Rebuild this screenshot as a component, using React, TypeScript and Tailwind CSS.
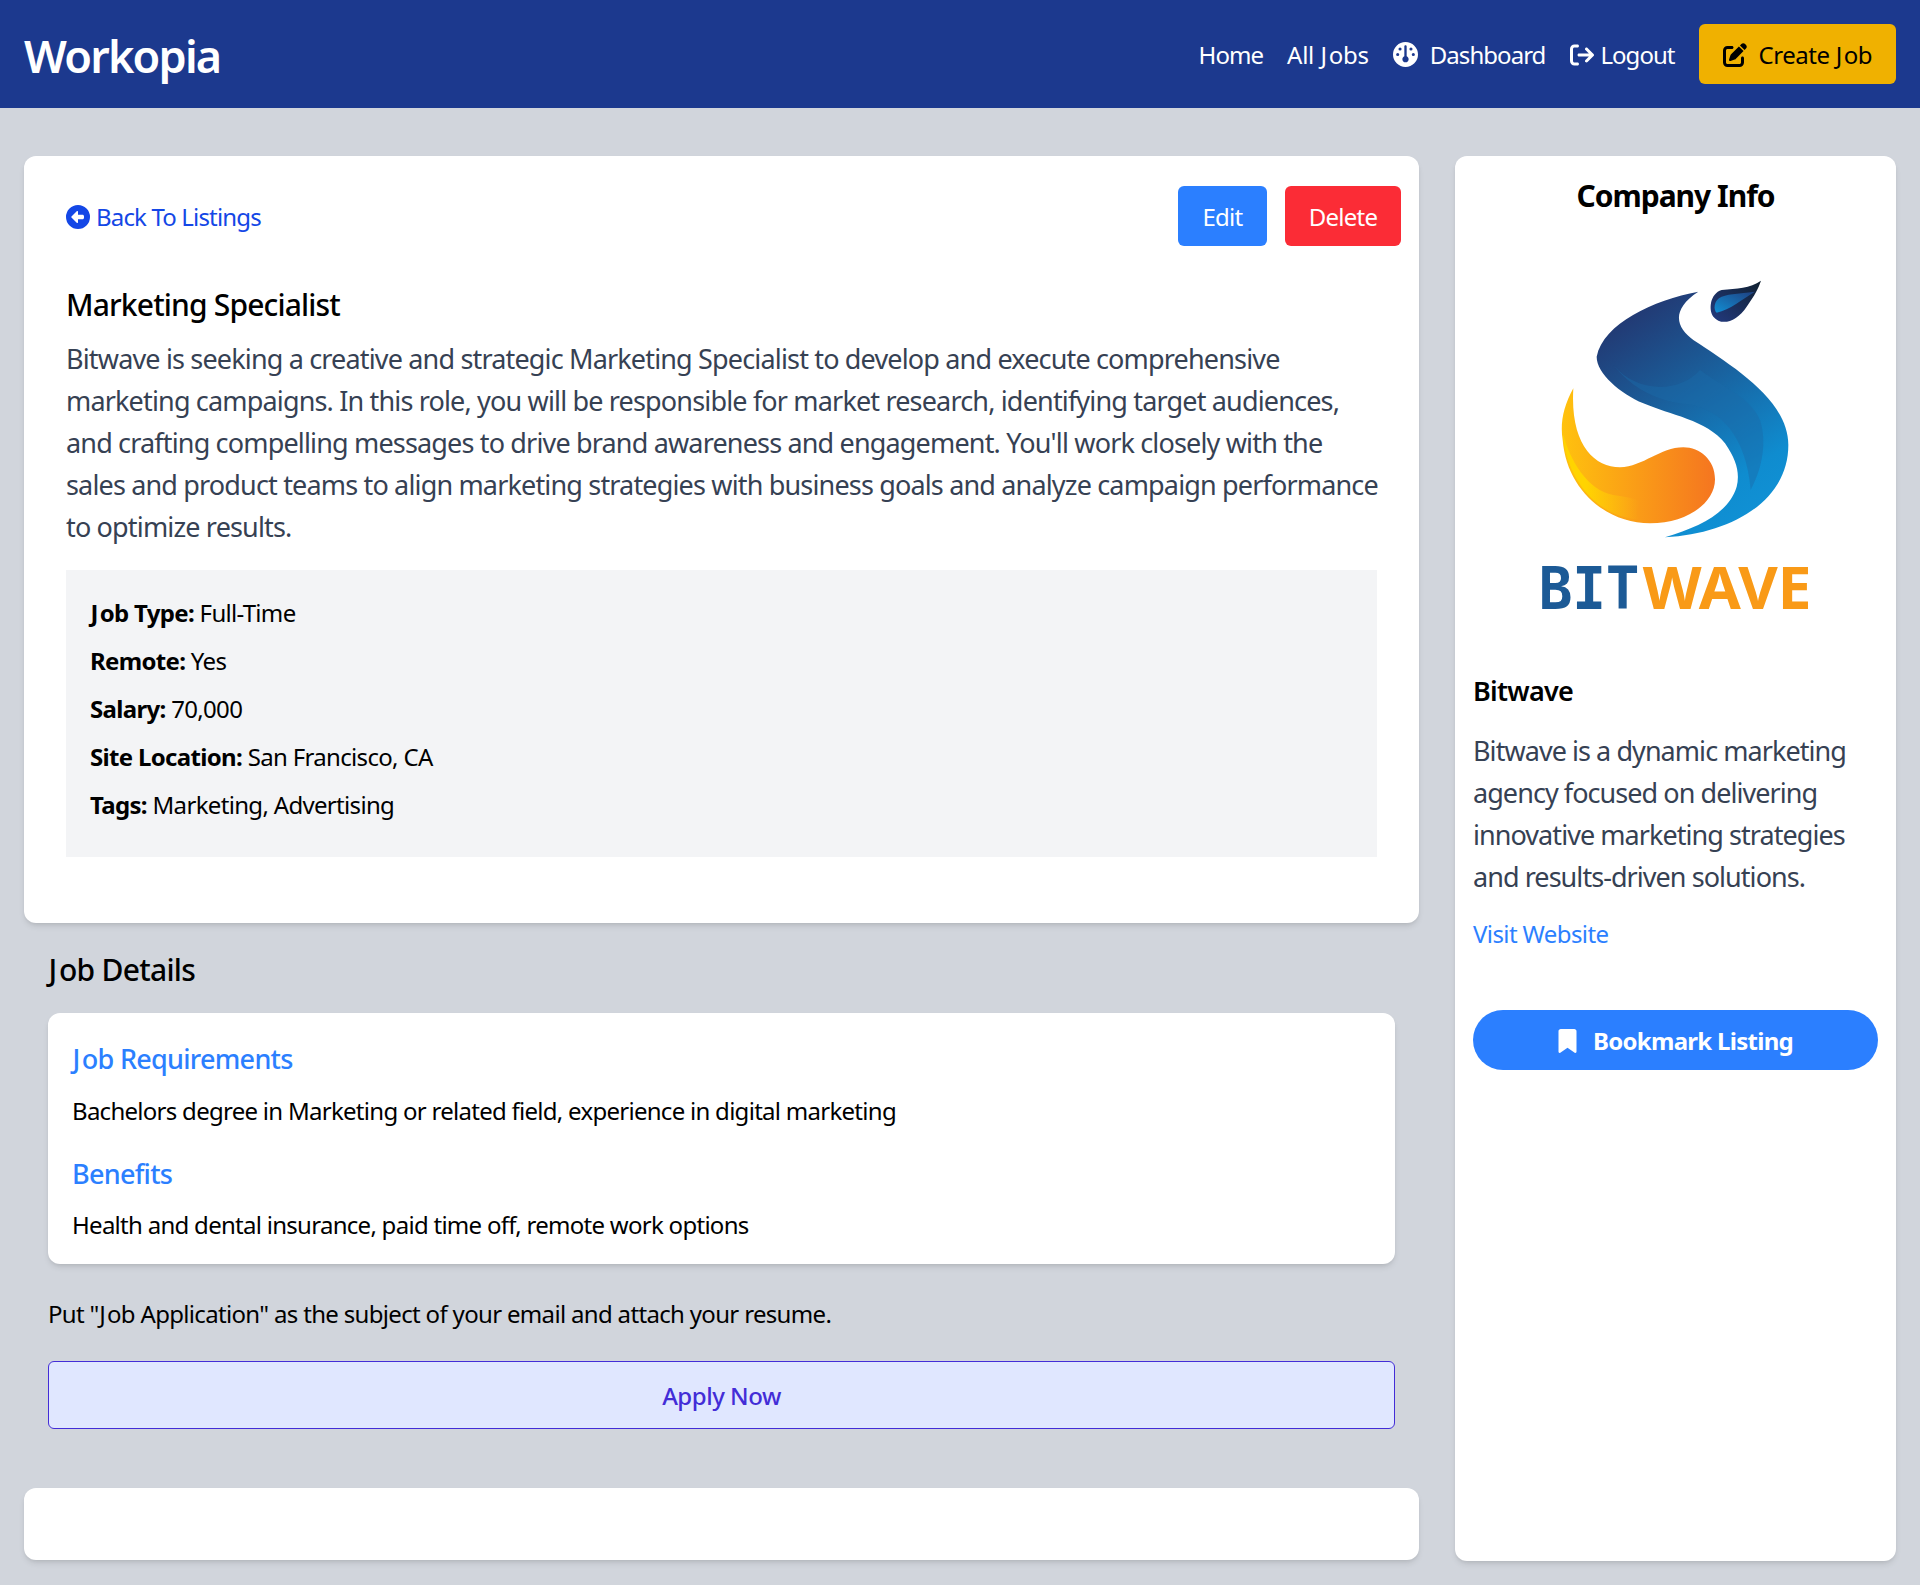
import React from "react";
import { FaGauge, FaArrowRightFromBracket, FaPenToSquare, FaCircleLeft, FaBookmark } from "react-icons/fa6";

function J() {
  return <span className="ml-[0.02em] mr-[0.08em]">J</span>;
}

function Logo() {
  return (
    <svg viewBox="0 0 1200 1110" className="w-[400px] h-[370px] block">
      <defs>
        <linearGradient id="bl" x1="0.25" y1="0" x2="0.75" y2="1">
          <stop offset="0" stopColor="#23356f" />
          <stop offset="0.35" stopColor="#1b5a96" />
          <stop offset="0.8" stopColor="#0f8ccf" />
          <stop offset="1" stopColor="#1192d6" />
        </linearGradient>
        <linearGradient id="or" x1="0" y1="0" x2="1" y2="0">
          <stop offset="0" stopColor="#ffc20e" />
          <stop offset="1" stopColor="#f57520" />
        </linearGradient>
        <linearGradient id="ye" x1="0" y1="0" x2="1" y2="0">
          <stop offset="0.3" stopColor="#ffd400" />
          <stop offset="1" stopColor="#ffc20e" stopOpacity="0" />
        </linearGradient>
        <linearGradient id="dr" x1="0" y1="1" x2="1" y2="0">
          <stop offset="0" stopColor="#233a80" />
          <stop offset="1" stopColor="#10202f" />
        </linearGradient>
        <linearGradient id="dr2" x1="0" y1="1" x2="1" y2="0">
          <stop offset="0" stopColor="#118fd4" />
          <stop offset="1" stopColor="#1f3f80" />
        </linearGradient>
      </defs>
      <path fill="url(#bl)" d="M655 95C520 120 370 190 350 290C350 340 420 400 490 430C570 465 680 480 735 550C770 600 780 640 770 680C745 760 660 800 555 832C760 820 925 720 925 555C925 420 760 320 640 240C590 205 570 150 655 95Z" />
      <path fill="#1a6aa8" opacity="0.45" d="M400 315C460 390 540 425 620 432C720 445 800 530 812 690C850 620 860 540 840 480C810 410 740 390 660 330C600 400 470 400 400 315Z" />
      <path fill="url(#dr)" d="M843 62C810 85 770 85 725 90C690 100 685 150 700 170C725 200 770 185 800 140C825 105 835 85 843 62Z" />
      <path fill="url(#dr2)" d="M825 95C790 100 750 100 725 110C700 120 700 150 710 158C750 150 790 115 825 95Z" />
      <path fill="url(#or)" d="M280 385C250 440 240 490 248 540C260 690 380 790 510 790C620 790 705 730 705 658C705 600 660 562 610 562C540 562 490 620 420 622C340 622 270 550 280 385Z" />
      <path fill="url(#ye)" d="M248 520C270 600 320 690 400 705C440 712 470 715 478 725C470 750 470 765 475 778C350 770 260 660 248 520Z" />
      <text x="176" y="1048" textLength="302" lengthAdjust="spacingAndGlyphs" fontFamily="'DejaVu Sans Mono',monospace" fontWeight="700" fontSize="178" fill="#1c5a96">BIT</text>
      <text x="488" y="1048" textLength="506" lengthAdjust="spacingAndGlyphs" fontFamily="'Noto Sans',sans-serif" fontWeight="700" fontSize="178" fill="#f99a17">WAVE</text>
    </svg>
  );
}

function Row({ label, value }: { label: React.ReactNode; value: string }) {
  return (
    <li className="mb-[12px] text-[24px] leading-[36px] tracking-[-0.028em]">
      <strong className="font-bold">{label}:</strong> {value}
    </li>
  );
}

export default function App() {
  return (
    <div className="min-h-[1585px] bg-gray-300 font-['Noto_Sans',sans-serif] text-[24px] leading-[36px] tracking-[-0.03em] text-black">
      <header className="bg-blue-900 h-[108px] px-[24px] flex items-center justify-between text-white">
        <h1 className="pt-[3px] text-[45px] leading-[54px] font-semibold tracking-[-0.04em]">Workopia</h1>
        <nav className="flex items-center gap-[24px] tracking-[-0.04em]">
          <a className="pt-[1px]">Home</a>
          <a className="pt-[1px] tracking-[-0.01em]">All <J />obs</a>
          <a className="flex items-center gap-[12px] pt-[1px]"><FaGauge className="w-[25px] h-[25px]" /><span>Dashboard</span></a>
          <a className="flex items-center gap-[5px] pt-[1px]"><FaArrowRightFromBracket className="w-[26px] h-[24px]" /><span>Logout</span></a>
          <a className="flex items-center gap-[12px] h-[60px] px-[24px] pt-[1px] bg-yellow-500 text-black rounded-[6px] tracking-[-0.02em]"><FaPenToSquare className="w-[24px] h-[24px]" /><span>Create <J />ob</span></a>
        </nav>
      </header>

      <main className="flex gap-[36px] px-[24px] mt-[48px]">
        <div className="flex-1">
          <section className="bg-white rounded-[12px] shadow-md h-[767px] px-[42px] pt-[30px] pb-[66px]">
            <div className="flex items-center justify-between -mr-[24px]">
              <a className="flex items-center gap-[6px] pt-[1px] text-blue-700 tracking-[-0.035em]"><FaCircleLeft className="w-[24px] h-[24px]" /><span>Back To Listings</span></a>
              <div className="flex gap-[18px]">
                <a className="h-[60px] w-[89px] pt-[1px] flex items-center justify-center bg-blue-500 text-white rounded-[6px]">Edit</a>
                <a className="h-[60px] w-[116px] pt-[1px] flex items-center justify-center bg-red-500 text-white rounded-[6px]">Delete</a>
              </div>
            </div>
            <h2 className="mt-[38px] text-[30px] leading-[42px] font-medium tracking-[-0.84px]">Marketing Specialist</h2>
            <p className="mt-[12px] -mr-[7px] text-gray-700 text-[27px] leading-[42px] tracking-[-0.031em]">
              Bitwave is seeking a creative and strategic Marketing Specialist to develop and execute comprehensive marketing campaigns. In this role, you will be responsible for market research, identifying target audiences, and crafting compelling messages to drive brand awareness and engagement. You'll work closely with the sales and product teams to align marketing strategies with business goals and analyze campaign performance to optimize results.
            </p>
            <ul className="mt-[22px] bg-gray-100 px-[24px] pt-[25px] pb-[22px]">
              <Row label={<><J />ob Type</>} value="Full-Time" />
              <Row label="Remote" value="Yes" />
              <Row label="Salary" value="70,000" />
              <Row label="Site Location" value="San Francisco, CA" />
              <Row label="Tags" value="Marketing, Advertising" />
            </ul>
          </section>

          <section className="mx-[24px] mt-[24px]">
            <h3 className="text-[30px] leading-[45px] font-medium"><J />ob Details</h3>
            <div className="mt-[21px] bg-white rounded-[12px] shadow-md px-[24px] pt-[26px] h-[251px]">
              <h4 className="text-[27px] leading-[40px] font-medium text-blue-500"><J />ob Requirements</h4>
              <p className="mt-[14px]">Bachelors degree in Marketing or related field, experience in digital marketing</p>
              <h4 className="mt-[25px] text-[27px] leading-[40px] font-medium text-blue-500">Benefits</h4>
              <p className="mt-[13px]">Health and dental insurance, paid time off, remote work options</p>
            </div>
            <p className="mt-[32px] tracking-[-0.028em]">Put "<J />ob Application" as the subject of your email and attach your resume.</p>
            <a className="mt-[29px] h-[68px] pt-[1px] flex items-center justify-center bg-indigo-100 border border-indigo-700 rounded-[6px] text-indigo-700 font-medium tracking-[-0.02em]">Apply Now</a>
          </section>

          <section className="mt-[59px] bg-white rounded-[12px] shadow-md h-[72px]" />
        </div>

        <aside className="w-[441px] h-[1405px] bg-white rounded-[12px] shadow-md px-[18px] pt-[17px]">
          <h2 className="text-center text-[30px] leading-[45px] font-bold tracking-[-1px]">Company Info</h2>
          <div className="mt-[42px] -mx-[18px] pl-[9px] flex justify-center"><Logo /></div>
          <h3 className="mt-[41px] text-[27px] leading-[40px] font-semibold">Bitwave</h3>
          <p className="mt-[19px] text-gray-700 text-[27px] leading-[42px] tracking-[-0.035em]">Bitwave is a dynamic marketing agency focused on delivering innovative marketing strategies and results-driven solutions.</p>
          <a className="block mt-[18px] text-blue-500 tracking-[-0.025em]">Visit Website</a>
          <a className="mt-[58px] h-[60px] pt-[1px] flex items-center justify-center gap-[16px] bg-blue-500 text-white rounded-full font-bold">
            <FaBookmark className="w-[19px] h-[24px]" /><span>Bookmark Listing</span>
          </a>
        </aside>
      </main>
    </div>
  );
}
